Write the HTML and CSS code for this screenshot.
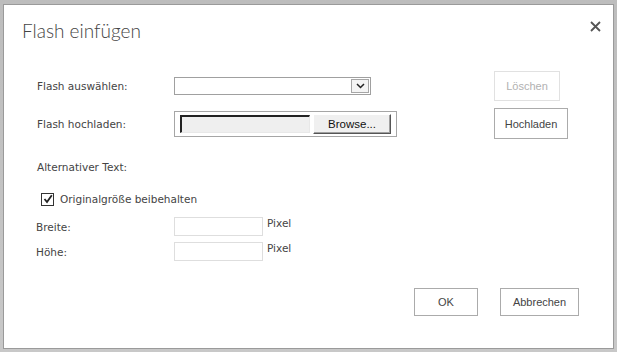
FILE: index.html
```html
<!DOCTYPE html>
<html lang="de">
<head>
<meta charset="utf-8">
<title>Flash einfügen</title>
<link rel="stylesheet" href="styles.css">
</head>
<body>
<div class="backdrop">
  <div class="dialog">
    <div class="header">
      <h1 class="title">Flash einfügen</h1>
      <span class="close" aria-label="Schließen">
        <svg width="11" height="11" viewBox="0 0 11 11"><path d="M1 1 L10 10 M10 1 L1 10" stroke="#555" stroke-width="1.8" fill="none"/></svg>
      </span>
    </div>

    <div class="row row1">
      <span class="label">Flash auswählen:</span>
      <div class="control">
        <div class="select">
          <span class="select-arrow">
            <svg width="9" height="6" viewBox="0 0 9 6"><path d="M1 1 L4.5 4.5 L8 1" stroke="#222" stroke-width="1.5" fill="none"/></svg>
          </span>
        </div>
      </div>
      <button class="btn btn-disabled btn-loeschen">Löschen</button>
    </div>

    <div class="row row2">
      <span class="label">Flash hochladen:</span>
      <div class="control">
        <div class="filebox">
          <span class="filetext"></span>
          <span class="browse">Browse...</span>
        </div>
      </div>
      <button class="btn btn-hoch">Hochladen</button>
    </div>

    <div class="row row3">
      <span class="label">Alternativer Text:</span>
    </div>

    <div class="row row4">
      <span class="check">
        <svg width="10" height="10" viewBox="0 0 10 10"><path d="M1.5 5 L4 8 L8.8 1.2" stroke="#222" stroke-width="1.8" fill="none"/></svg>
      </span>
      <span class="check-label">Originalgröße beibehalten</span>
    </div>

    <div class="row row5">
      <span class="label label-small">Breite:</span>
      <div class="control control-px">
        <span class="pxinput"></span>
        <span class="unit">Pixel</span>
      </div>
    </div>

    <div class="row row6">
      <span class="label label-small">Höhe:</span>
      <div class="control control-px">
        <span class="pxinput"></span>
        <span class="unit">Pixel</span>
      </div>
    </div>

    <div class="footer">
      <button class="btn btn-ok">OK</button>
      <button class="btn btn-cancel">Abbrechen</button>
    </div>
  </div>
</div>
</body>
</html>
```

FILE: styles.css
```css
* { box-sizing: border-box; }
html, body { margin: 0; padding: 0; }
body {
  width: 617px;
  height: 352px;
  background: #c4c4c4;
  overflow: hidden;
}
.backdrop {
  position: relative;
  width: 617px;
  height: 352px;
  background: linear-gradient(#bdbdbd, #c8c8c8);
}
.dialog {
  position: absolute;
  left: 3px;
  top: 4px;
  width: 611px;
  height: 345px;
  background: #fff;
  border: 1px solid #9a9a9a;
  display: flex;
  flex-direction: column;
  font-family: "DejaVu Sans", Verdana, sans-serif;
  color: #444;
}
.header {
  height: 66px;
  display: flex;
  justify-content: space-between;
  align-items: flex-start;
  padding: 14px 12px 0 18px;
}
.title {
  margin: 0;
  font-family: Lato, "Open Sans", sans-serif;
  font-weight: 300;
  font-size: 19px;
  line-height: 24px;
  color: #444;
}
.close {
  display: flex;
  margin-top: 2px;
}
.row {
  display: flex;
  align-items: center;
  padding-left: 33px;
}
.label {
  width: 137px;
  font-size: 10.5px;
  flex-shrink: 0;
}
.control {
  width: 319px;
  display: flex;
  align-items: center;
}
.row1 { height: 30px; }
.row2 { height: 31px; margin-top: 7px; }
.row3 { height: 18px; margin-top: 19px; }
.row4 { height: 18px; margin-top: 14px; padding-left: 37px; }
.row5 { height: 19px; margin-top: 9px; }
.row6 { height: 19px; margin-top: 6px; }
.label-small { padding-left: 0; margin-left: -1px; width: 138px; }

.select {
  width: 197px;
  height: 18px;
  border: 1px solid #a0a0a0;
  background: #fff;
  display: flex;
  justify-content: flex-end;
  align-items: center;
  padding-right: 1px;
}
.select-arrow {
  width: 18px;
  height: 14px;
  border: 1px solid #a6a6a6;
  background: #f4f4f4;
  display: flex;
  align-items: center;
  justify-content: center;
}
.filebox {
  width: 223px;
  height: 26px;
  border: 1px solid #a6a6a6;
  display: flex;
  align-items: center;
  padding-left: 5px;
  gap: 3px;
}
.filetext {
  width: 130px;
  height: 18px;
  background: #efefef;
  border-top: 2px solid #222;
  border-left: 2px solid #222;
  border-right: 1px solid #e8e8e8;
  border-bottom: 1px solid #e8e8e8;
}
.browse {
  width: 78px;
  height: 20px;
  background: #f0f0f0;
  border-top: 1px solid #fff;
  border-left: 1px solid #fff;
  border-right: 1px solid #555;
  border-bottom: 1px solid #555;
  box-shadow: inset -1px -1px 0 #a0a0a0;
  font-family: "Liberation Sans", Arial, sans-serif;
  font-size: 11.5px;
  color: #111;
  display: flex;
  align-items: center;
  justify-content: center;
}
.btn {
  font-family: "Liberation Sans", Arial, sans-serif;
  font-size: 11px;
  color: #444;
  background: #fff;
  border: 1px solid #ababab;
  padding: 0;
  margin: 0;
}
.btn-loeschen {
  width: 66px;
  height: 30px;
  margin-left: 1px;
}
.btn-disabled {
  color: #b1b1b1;
  border-color: #e1e1e1;
}
.btn-hoch {
  width: 74px;
  height: 31px;
  margin-left: 1px;
}
.check {
  width: 13px;
  height: 13px;
  border: 1px solid #333;
  display: flex;
  align-items: center;
  justify-content: center;
  background: #fff;
}
.check-label {
  margin-left: 6px;
  font-size: 10.5px;
}
.control-px {
  align-items: flex-start;
  height: 19px;
}
.pxinput {
  width: 89px;
  height: 19px;
  border: 1px solid #dedede;
}
.unit {
  margin-left: 4px;
  font-size: 10.5px;
  line-height: 13px;
}
.footer {
  display: flex;
  justify-content: flex-end;
  gap: 22px;
  margin-top: 27px;
  padding-right: 34px;
}
.btn-ok { width: 64px; height: 28px; }
.btn-cancel { width: 79px; height: 28px; }
```
